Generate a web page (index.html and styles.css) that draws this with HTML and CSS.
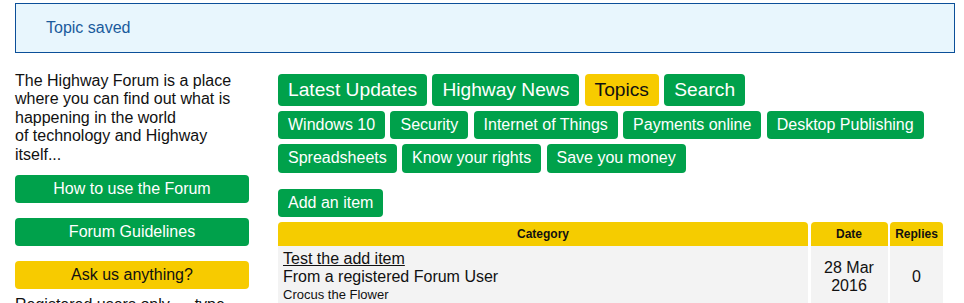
FILE: index.html
```html
<!DOCTYPE html>
<html lang="en">
<head>
<meta charset="utf-8">
<title>Highway Forum</title>
<link rel="stylesheet" href="styles.css">
</head>
<body>
<div class="page">
  <div class="alert">Topic saved</div>
  <div class="main">
    <aside class="side">
      <p class="intro">The Highway Forum is a place where you can find out what is happening in the world<br>of technology and Highway itself...</p>
      <div class="side-buttons">
        <a class="btn btn-block" href="#">How to use the Forum</a>
        <a class="btn btn-block" href="#">Forum Guidelines</a>
        <a class="btn btn-block btn-yellow" href="#">Ask us anything?</a>
      </div>
      <p class="note">Registered users only — type your question</p>
    </aside>
    <section class="content">
      <nav class="nav">
        <a class="btn btn-lg" href="#">Latest Updates</a>
        <a class="btn btn-lg" href="#">Highway News</a>
        <a class="btn btn-lg btn-yellow" href="#">Topics</a>
        <a class="btn btn-lg" href="#">Search</a>
      </nav>
      <div class="tags">
        <a class="btn" href="#">Windows 10</a>
        <a class="btn" href="#">Security</a>
        <a class="btn" href="#">Internet of Things</a>
        <a class="btn" href="#">Payments online</a>
        <a class="btn" href="#">Desktop Publishing</a>
        <a class="btn" href="#">Spreadsheets</a>
        <a class="btn" href="#">Know your rights</a>
        <a class="btn" href="#">Save you money</a>
      </div>
      <div class="actions">
        <a class="btn" href="#">Add an item</a>
      </div>
      <div class="table">
        <div class="th">Category</div>
        <div class="th">Date</div>
        <div class="th">Replies</div>
        <div class="td td-cat">
          <a class="item-link" href="#">Test the add item</a>
          <div>From a registered Forum User</div>
          <div class="author">Crocus the Flower</div>
        </div>
        <div class="td td-center">28 Mar<br>2016</div>
        <div class="td td-center">0</div>
      </div>
    </section>
  </div>
</div>
</body>
</html>
```
FILE: styles.css
```css
html, body {
  margin: 0;
  padding: 0;
  background: #ffffff;
}
body {
  font-family: "Liberation Sans", Arial, sans-serif;
  font-size: 16px;
  line-height: 18.4px;
  color: #111111;
}
.page {
  padding: 3px 0 0 15px;
}
.alert {
  box-sizing: border-box;
  width: 940px;
  height: 50px;
  padding: 15px 30px;
  background: #e8f6fd;
  border: 1px solid #0b4f99;
  color: #1a5b9c;
}
.main {
  display: flex;
  align-items: flex-start;
  gap: 29px;
  margin-top: 19px;
}
.side {
  width: 234px;
  flex: none;
}
.intro {
  margin: 0;
}
.side-buttons {
  display: flex;
  flex-direction: column;
  gap: 14.6px;
  margin-top: 10.5px;
}
.note {
  margin: 7px 0 0;
}
.content {
  width: 665px;
  padding-top: 2px;
}
.btn {
  display: inline-block;
  box-sizing: border-box;
  padding: 5px 10px;
  background: #00a14b;
  color: #ffffff;
  text-decoration: none;
  border-radius: 4px;
  line-height: 18.4px;
  white-space: nowrap;
}
.btn-yellow {
  background: #f7cb00;
  color: #111111;
}
.btn-block {
  display: block;
  text-align: center;
}
.btn-lg {
  font-size: 19.2px;
  line-height: 22px;
}
.nav, .tags {
  display: flex;
  flex-wrap: wrap;
  gap: 5px 5.3px;
}
.tags {
  margin-top: 5px;
}
.actions {
  margin-top: 16px;
}
.table {
  display: grid;
  grid-template-columns: 1fr 77px 53px;
  column-gap: 2.5px;
  margin-top: 4.5px;
}
.th {
  background: #f5cc00;
  border-radius: 4px 4px 0 0;
  font-size: 12px;
  font-weight: bold;
  text-align: center;
  line-height: 14px;
  padding: 5px 0;
  color: #111111;
}
.td {
  background: #f3f3f3;
  padding: 4px 5px 6px;
  line-height: 18.4px;
}
.td-center {
  display: flex;
  align-items: center;
  justify-content: center;
  text-align: center;
  padding: 0;
}
.item-link {
  color: #111111;
  text-decoration: underline;
}
.author {
  font-size: 13px;
  line-height: 16px;
}
```
